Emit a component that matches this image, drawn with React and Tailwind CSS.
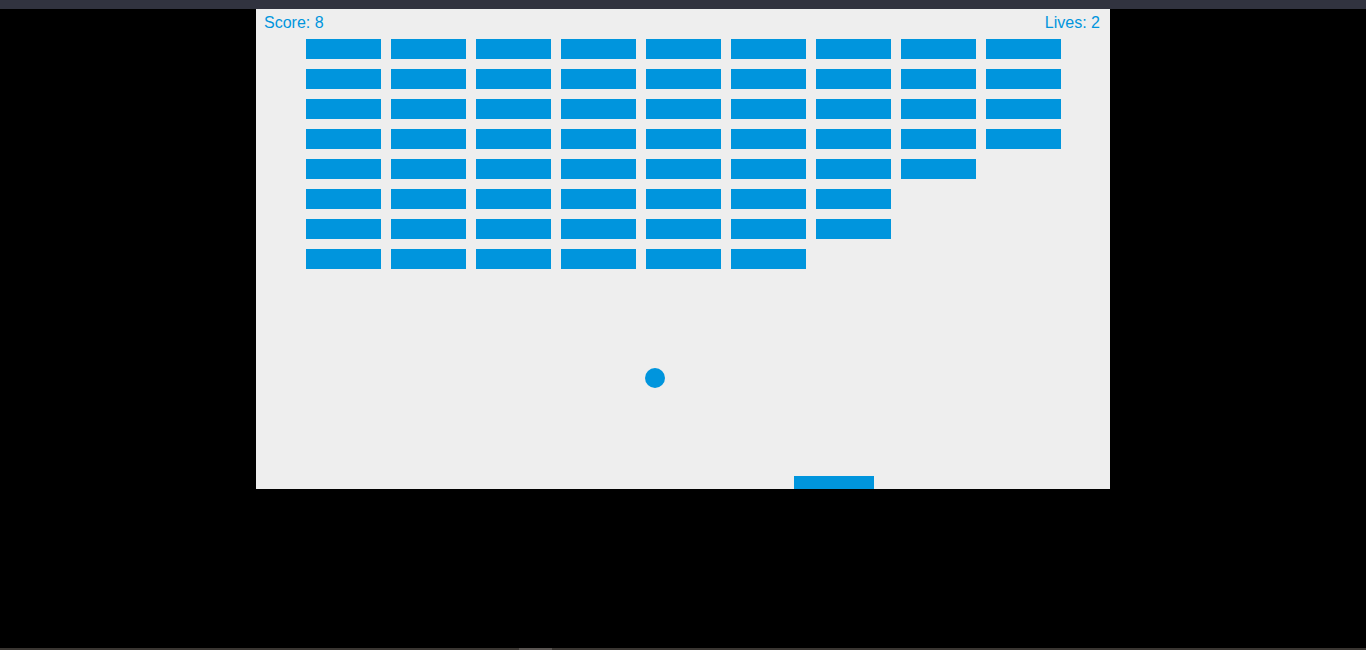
import React from "react";

const ROWS = [9, 9, 9, 9, 8, 7, 7, 6];

export default function App() {
  return (
    <div className="flex h-[650px] w-full flex-col overflow-hidden bg-black">
      <div className="h-[9px] w-full bg-[#31333f]" />
      <div
        className="relative mx-auto h-[480px] w-[854px] bg-[#eeeeee]"
        style={{ fontFamily: '"Liberation Sans", Arial, sans-serif' }}
      >
        <div className="absolute left-0 right-0 top-[6px] flex justify-between pl-[8px] pr-[10px] text-[16px] leading-4 text-[#0095dd]">
          <span>Score: 8</span>
          <span>Lives: 2</span>
        </div>
        <div className="ml-[50px] pt-[30px] flex flex-col gap-[10px]">
          {ROWS.map((n, r) => (
            <div key={r} className="flex gap-[10px]">
              {Array.from({ length: n }).map((_, c) => (
                <div key={c} className="h-[20px] w-[75px] bg-[#0095dd]" />
              ))}
            </div>
          ))}
        </div>
        <div className="absolute left-[389px] top-[359px] h-[20px] w-[20px] rounded-full bg-[#0095dd]" />
        <div className="absolute bottom-0 left-[538px] h-[13px] w-[80px] bg-[#0095dd]" />
      </div>
      <div className="flex-1" />
      <div className="flex h-[2px] w-full bg-[#3a3632]">
        <div className="ml-[519px] h-full w-[33px] bg-[#5a5552]" />
      </div>
    </div>
  );
}
